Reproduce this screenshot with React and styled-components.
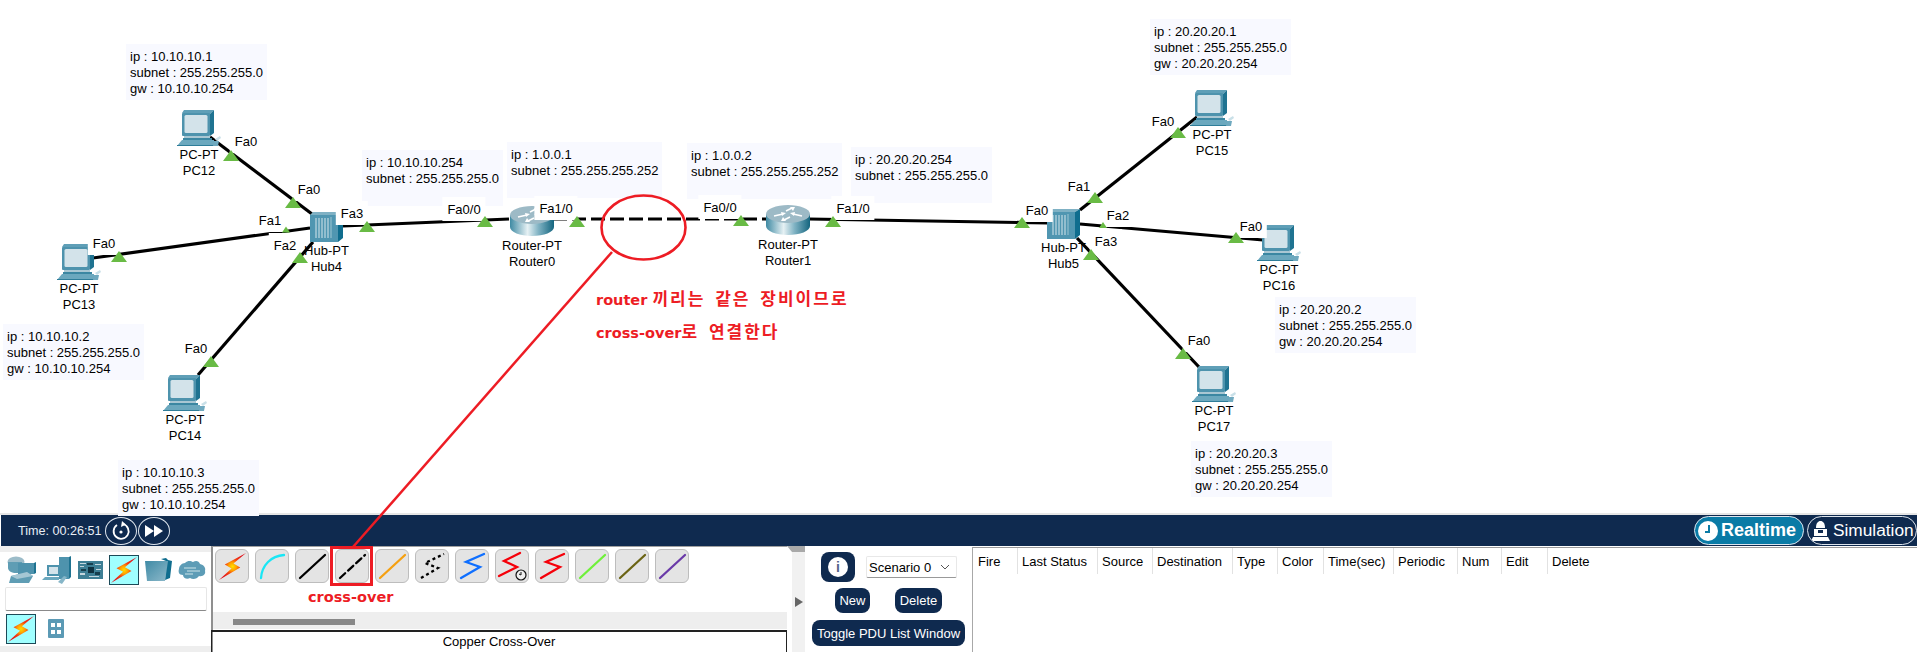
import React from "react";
import styled, { createGlobalStyle } from "styled-components";

const Global = createGlobalStyle`
  html, body { margin: 0; padding: 0; background: #fff; overflow: hidden; }
  body { font-family: "Liberation Sans", Arial, sans-serif; font-size: 13px; color: #000; }
  * { box-sizing: border-box; }
`;

const NAVY = "#0f2a4f";
const RED = "#ed1c24";

const Page = styled.div`
  position: relative;
  width: 1917px;
  height: 652px;
  display: flex;
  flex-direction: column;
  overflow: hidden;
`;
const Canvas = styled.div`
  position: relative;
  height: 515px;
  flex: none;
  background: #fff;
  border-bottom: 2px solid #e6e6e6;
`;
const Note = styled.div`
  position: absolute;
  left: ${(p) => p.$x}px;
  top: ${(p) => p.$y}px;
  width: ${(p) => p.$w}px;
  height: 56px;
  padding: 5px 4px;
  background: #f8f9ff;
  line-height: 16px;
  white-space: nowrap;
`;
const Layer = styled.svg`
  position: absolute;
  left: 0;
  top: 0;
  pointer-events: none;
`;
const Node = styled.div`
  position: absolute;
  left: ${(p) => p.$x}px;
  top: ${(p) => p.$y}px;
  width: ${(p) => p.$w}px;
  display: flex;
  flex-direction: column;
  align-items: center;
  line-height: 16px;
  white-space: nowrap;
  svg { display: block; margin-bottom: ${(p) => p.$gap}px; }
`;
const PortLabel = styled.div`
  position: absolute;
  left: ${(p) => p.$x}px;
  top: ${(p) => p.$y}px;
  transform: translate(-50%, -50%);
  padding: 5px 5px 3px;
  background: #fff;
  line-height: 16px;
  white-space: nowrap;
`;
const Annotation = styled.div`
  position: absolute;
  left: 596px;
  top: ${(p) => p.$y}px;
  height: 22px;
  white-space: nowrap;
  color: ${RED};
  font: bold 14.5px/22px "DejaVu Sans", sans-serif;
`;
const Ko = styled.span`
  font-family: "Noto Sans CJK KR", sans-serif;
  font-size: 17px;
  letter-spacing: 2px;
  word-spacing: 4px;
`;

const TimeBar = styled.div`
  height: 31px;
  flex: none;
  margin-left: 1px;
  background: ${NAVY};
  display: flex;
  align-items: center;
  padding-left: 17px;
`;
const TimeText = styled.span`
  color: #e8eef5;
  font-size: 12.6px;
  margin-right: 3px;
`;
const RoundBtn = styled.div`
  width: 32px;
  height: 28px;
  margin-right: 1px;
  border: 1px solid #dfe6ee;
  border-radius: 50%;
  display: flex;
  align-items: center;
  justify-content: center;
`;
const Spacer = styled.div`flex: 1;`;
const ModeBtn = styled.div`
  height: 29px;
  width: ${(p) => p.$w}px;
  margin-left: ${(p) => p.$ml}px;
  border: 1px solid #dfe6ee;
  border-radius: 15px;
  background: ${(p) => (p.$active ? "#0a7ba6" : NAVY)};
  color: #fff;
  font-size: ${(p) => (p.$active ? "18px" : "17.3px")};
  font-weight: ${(p) => (p.$active ? 700 : 400)};
  display: flex;
  align-items: center;
  gap: 3px;
  padding-left: 3px;
  white-space: nowrap;
  overflow: hidden;
`;
const Dock = styled.div`
  flex: 1;
  display: flex;
  min-height: 0;
  background: #fff;
`;
const LeftPanel = styled.div`
  width: 211px;
  flex: none;
  display: flex;
  flex-direction: column;
`;
const Band = styled.div`
  height: 6px;
  background: #eeeeee;
`;
const CategoryRow = styled.div`
  height: 35px;
  display: flex;
  align-items: center;
  gap: 6px;
  padding-left: 7px;
  svg { display: block; }
`;
const SearchBox = styled.div`
  height: 24px;
  margin: 0 4px 0 5px;
  background: #fff;
  border: 1px solid #e6e6e6;
  border-bottom: 1px solid #8a8a8a;
  border-radius: 2px;
`;
const SubRow = styled.div`
  height: 35px;
  display: flex;
  align-items: center;
  gap: 12px;
  padding-left: 6px;
  svg { display: block; }
`;
const Selected = styled.div`
  width: 30px;
  height: 30px;
  background: #a0ffff;
  border: 1px solid #1c4a58;
  display: flex;
  align-items: center;
  justify-content: center;
`;
const CablePanel = styled.div`
  width: 576px;
  flex: none;
  display: flex;
  flex-direction: column;
  border-left: 2px solid #8f8f8f;
  border-top: 1px solid #a0a0a0;
`;
const CableRow = styled.div`
  display: flex;
  gap: 6px;
  padding: 2px 0 0 2px;
`;
const CableBtn = styled.div`
  width: 34px;
  height: 34px;
  background: #e4e4e4;
  border: 1px solid #bdbdbd;
  border-radius: 6px;
  display: flex;
  align-items: center;
  justify-content: center;
  svg { display: block; }
`;
const CableCaption = styled.div`
  height: 29px;
  padding-left: 95px;
  color: ${RED};
  font: bold 14.5px/29px "DejaVu Sans", sans-serif;
`;
const ScrollTrack = styled.div`
  height: 20px;
  background: #eeeeee;
  padding: 7px 0 0 20px;
`;
const ScrollThumb = styled.div`
  width: 122px;
  height: 6px;
  background: #888;
`;
const CableInfo = styled.div`
  flex: 1;
  margin-top: 1px;
  border-top: 2px solid #222;
  border-left: 1px solid #222;
  border-right: 1px solid #222;
  margin-left: -2px;
  text-align: center;
  line-height: 20px;
  font-size: 13px;
`;
const Collapser = styled.div`
  width: 18px;
  flex: none;
  background: #f1f1f1;
  border-left: 5px solid #fff;
  border-top: 6px solid #a9a9a9;
  display: flex;
  align-items: center;
  justify-content: center;
`;
const Arrow = styled.div`
  width: 0;
  height: 0;
  border-left: 8px solid #666;
  border-top: 5px solid transparent;
  border-bottom: 5px solid transparent;
`;
const ScenarioPanel = styled.div`
  width: 167px;
  flex: none;
  display: flex;
  flex-direction: column;
  padding-top: 6px;
`;
const ScenarioTop = styled.div`
  display: flex;
  align-items: center;
  gap: 11px;
  padding-left: 16px;
  height: 30px;
`;
const InfoBtn = styled.div`
  width: 34px;
  height: 30px;
  background: ${NAVY};
  border-radius: 8px;
  display: flex;
  align-items: center;
  justify-content: center;
`;
const InfoDot = styled.div`
  width: 20px;
  height: 20px;
  border-radius: 50%;
  background: #fff;
  color: #55658a;
  font-size: 14px;
  font-weight: 700;
  line-height: 20px;
  text-align: center;
`;
const SelectBox = styled.div`
  width: 91px;
  height: 22px;
  padding-left: 2px;
  padding-right: 6px;
  border: 1px solid #e8e8e8;
  border-bottom: 1px solid #999;
  border-radius: 2px;
  display: flex;
  align-items: center;
  justify-content: space-between;
  white-space: nowrap;
`;
const ScenarioButtons = styled.div`
  display: flex;
  gap: 25px;
  padding-left: 30px;
  margin-top: 6px;
`;
const PillBtn = styled.div`
  width: ${(p) => p.$w}px;
  height: ${(p) => p.$h}px;
  background: ${NAVY};
  color: #fff;
  border-radius: 8px;
  display: flex;
  align-items: center;
  justify-content: center;
  white-space: nowrap;
`;
const ToggleWrap = styled.div`
  margin: 7px 0 0 7px;
`;
const ListPanel = styled.div`
  flex: 1;
  border-left: 1px solid #a8a8a8;
  border-top: 1px solid #9a9a9a;
  margin-top: 1px;
`;
const ListHeader = styled.div`
  display: flex;
  height: 26px;
`;
const ListCol = styled.div`
  width: ${(p) => p.$w}px;
  flex: none;
  padding: 6px 0 0 ${(p) => (p.$first ? 5 : 4)}px;
  border-left: ${(p) => (p.$first ? "none" : "1px solid #e2e2e2")};
  line-height: 16px;
  white-space: nowrap;
`;

const BoltDefs = ({ id }) => (
  <defs>
    <radialGradient id={id} cx="50%" cy="50%" r="50%">
      <stop offset="0" stopColor="#ffe000" />
      <stop offset="0.3" stopColor="#ffa000" />
      <stop offset="0.55" stopColor="#f54010" />
      <stop offset="1" stopColor="#e0101a" />
    </radialGradient>
  </defs>
);
const Bolt = ({ id, size = 28 }) => (
  <svg width={size} height={size} viewBox="0 0 30 30">
    <BoltDefs id={id} />
    <polygon points="29,1 7,13 14,17 1,29 23,16 16,12" fill={`url(#${id})`} />
  </svg>
);

const PcIcon = () => (
  <svg width="44" height="36" viewBox="0 0 44 36">
    <polygon points="5,3 7,0 37,0 33,4 7,4" fill="#5f9fb7" />
    <polygon points="33,4 37,0 37,23 33,26" fill="#1f7391" />
    <rect x="5" y="3" width="28" height="23" rx="1" fill="#4e93ad" />
    <rect x="7.5" y="5" width="23" height="18" rx="1.5" fill="#d3e3ea" />
    <rect x="7" y="26" width="26" height="2" fill="#a9c7d3" />
    <rect x="6" y="28" width="29" height="2" fill="#3b87a2" />
    <polygon points="5,30 37,30 37,36 0,36" fill="#6ba8be" />
    <rect x="0" y="35" width="37" height="1" fill="#2e7d99" />
    <polygon points="38,29 43,26 44,28 40,31" fill="#c9e0e8" />
    <polygon points="37,31 42,31 41,36 36,36" fill="#6fa9bf" />
  </svg>
);
const RouterIcon = () => (
  <svg width="44" height="30" viewBox="0 0 44 30">
    <defs>
      <linearGradient id="rbody" x1="0" x2="1" y1="0" y2="0">
        <stop offset="0" stopColor="#3f8aa3" />
        <stop offset="0.4" stopColor="#e6f1f4" />
        <stop offset="0.65" stopColor="#7fb2c3" />
        <stop offset="1" stopColor="#14657f" />
      </linearGradient>
    </defs>
    <path d="M0 9 V21 C0 26 10 30 22 30 C34 30 44 26 44 21 V9 Z" fill="url(#rbody)" />
    <ellipse cx="22" cy="9" rx="22" ry="9" fill="#9dbac6" />
    <g stroke="#fff" strokeWidth="1.6" fill="#fff">
      <path d="M8 11 L17 9 M27 9 L36 11 M20 6 L26 3 M24 12 L18 15" fill="none" />
      <polygon points="20,8 15,7 16,11" stroke="none" />
      <polygon points="24,8 29,7 28,11" stroke="none" />
      <polygon points="24,2 29,2 27,6" stroke="none" />
      <polygon points="20,16 15,16 17,12" stroke="none" />
    </g>
  </svg>
);
const HubIcon = () => (
  <svg width="33" height="30" viewBox="0 0 33 30">
    <polygon points="0,3 3,0 33,0 28,3" fill="#7fb1c4" />
    <polygon points="28,3 33,0 33,26 28,30" fill="#0f6d8e" />
    <rect x="0" y="3" width="28" height="27" fill="#5096b1" />
    <g stroke="#d5e6ec" strokeWidth="1">
      <path d="M6 6 V26 M9 6 V26 M12 6 V26 M15 6 V26 M18 6 V26" />
    </g>
    <rect x="20.5" y="5" width="1" height="21" fill="#9cc5d3" />
  </svg>
);

const nodes = [
  { k: "pc", x: 177, y: 110, a: "PC-PT", b: "PC12" },
  { k: "pc", x: 57, y: 244, a: "PC-PT", b: "PC13" },
  { k: "pc", x: 163, y: 375, a: "PC-PT", b: "PC14" },
  { k: "pc", x: 1190, y: 90, a: "PC-PT", b: "PC15" },
  { k: "pc", x: 1257, y: 225, a: "PC-PT", b: "PC16" },
  { k: "pc", x: 1192, y: 366, a: "PC-PT", b: "PC17" },
  { k: "hub", x: 310, y: 212, a: "Hub-PT", b: "Hub4" },
  { k: "hub", x: 1047, y: 209, a: "Hub-PT", b: "Hub5" },
  { k: "router", x: 510, y: 206, a: "Router-PT", b: "Router0" },
  { k: "router", x: 766, y: 205, a: "Router-PT", b: "Router1" },
];
const icons = {
  pc: [PcIcon, 44, 1],
  hub: [HubIcon, 33, 1],
  router: [RouterIcon, 44, 2],
};

const notes = [
  { x: 126, y: 44, w: 141, l: ["ip : 10.10.10.1", "subnet : 255.255.255.0", "gw : 10.10.10.254"] },
  { x: 362, y: 150, w: 141, l: ["ip : 10.10.10.254", "subnet : 255.255.255.0"] },
  { x: 507, y: 142, w: 155, l: ["ip : 1.0.0.1", "subnet : 255.255.255.252"] },
  { x: 687, y: 143, w: 155, l: ["ip : 1.0.0.2", "subnet : 255.255.255.252"] },
  { x: 851, y: 147, w: 141, l: ["ip : 20.20.20.254", "subnet : 255.255.255.0"] },
  { x: 1150, y: 19, w: 141, l: ["ip : 20.20.20.1", "subnet : 255.255.255.0", "gw : 20.20.20.254"] },
  { x: 3, y: 324, w: 141, l: ["ip : 10.10.10.2", "subnet : 255.255.255.0", "gw : 10.10.10.254"] },
  { x: 118, y: 460, w: 141, l: ["ip : 10.10.10.3", "subnet : 255.255.255.0", "gw : 10.10.10.254"] },
  { x: 1275, y: 297, w: 141, l: ["ip : 20.20.20.2", "subnet : 255.255.255.0", "gw : 20.20.20.254"] },
  { x: 1191, y: 441, w: 141, l: ["ip : 20.20.20.3", "subnet : 255.255.255.0", "gw : 20.20.20.254"] },
];

const links = [
  [210, 137, 312, 214],
  [93, 258, 310, 228],
  [313, 242, 198, 375],
  [343, 226, 509, 219],
  [809, 219, 1048, 223],
  [1080, 210, 1197, 117],
  [1080, 224, 1263, 240],
  [1077, 238, 1199, 367],
];

const ports = [
  [246, 141, "Fa0"], [309, 189, "Fa0"], [270, 220, "Fa1"], [285, 245, "Fa2"], [352, 213, "Fa3"], [104, 243, "Fa0"],
  [196, 348, "Fa0"], [464, 209, "Fa0/0"], [556, 208, "Fa1/0"], [720, 207, "Fa0/0"], [853, 208, "Fa1/0"],
  [1037, 210, "Fa0"], [1079, 186, "Fa1"], [1118, 215, "Fa2"], [1106, 241, "Fa3"], [1163, 121, "Fa0"], [1251, 226, "Fa0"], [1199, 340, "Fa0"],
];

const tris = [
  [231, 156], [293, 203], [119, 257], [300, 258], [367, 227], [211, 362],
  [485, 222], [577, 222], [741, 221], [833, 222], [1022, 223], [1095, 198],
  [1178, 133], [1236, 238], [1091, 255], [1183, 354],
];
const smallTris = [[286, 229.5], [1103, 225]];

const Line = ({ c, w = 2.3, d }) => <path d={d} stroke={c} strokeWidth={w} fill="none" strokeLinecap="round" />;

const cables = [
  <Bolt id="bc" size={29} />,
  <svg width="32" height="32" viewBox="0 0 32 32"><path d="M5 28 C6 15 15 6 28 5" stroke="#19e6f5" strokeWidth="2.3" fill="none" strokeLinecap="round" /></svg>,
  <svg width="32" height="32" viewBox="0 0 32 32"><Line c="#000" d="M4 28 L29 5" /></svg>,
  <svg width="32" height="32" viewBox="0 0 32 32"><path d="M4 28 L29 5" stroke="#000" strokeWidth="2.3" strokeDasharray="7 4" strokeLinecap="round" fill="none" /></svg>,
  <svg width="32" height="32" viewBox="0 0 32 32"><Line c="#f5a011" d="M4 28 L29 5" /></svg>,
  <svg width="32" height="32" viewBox="0 0 32 32"><path d="M5 28 L22 18 L9 13 L28 4" stroke="#000" strokeWidth="2.3" strokeDasharray="3 3" fill="none" /></svg>,
  <svg width="32" height="32" viewBox="0 0 32 32"><path d="M5 28 L24 17 L10 12 L28 4" stroke="#0f6fff" strokeWidth="2.3" fill="none" strokeLinecap="round" /></svg>,
  <svg width="32" height="32" viewBox="0 0 32 32"><path d="M3 26 L21 17 L8 11 L24 3" stroke="#f5000a" strokeWidth="2.3" fill="none" strokeLinecap="round" /><circle cx="25" cy="25" r="5" fill="#eee" stroke="#111" strokeWidth="1.2" /><path d="M25 25 V22 M25 25 L23 24" stroke="#111" strokeWidth="1" /></svg>,
  <svg width="32" height="32" viewBox="0 0 32 32"><path d="M5 28 L24 17 L10 12 L28 4" stroke="#f5000a" strokeWidth="2.3" fill="none" strokeLinecap="round" /></svg>,
  <svg width="32" height="32" viewBox="0 0 32 32"><Line c="#6ff03a" d="M4 28 L29 5" /></svg>,
  <svg width="32" height="32" viewBox="0 0 32 32"><Line c="#6b6414" d="M4 28 L29 5" /></svg>,
  <svg width="32" height="32" viewBox="0 0 32 32"><Line c="#6a3aa8" d="M4 28 L29 5" /></svg>,
];

const columns = [
  ["Fire", 44], ["Last Status", 80], ["Source", 55], ["Destination", 80], ["Type", 45], ["Color", 46],
  ["Time(sec)", 70], ["Periodic", 64], ["Num", 44], ["Edit", 46], ["Delete", 70],
];

const DevicesIcon = () => (
  <svg width="29" height="28" viewBox="0 0 29 28">
    <ellipse cx="9" cy="6" rx="8.5" ry="5.5" fill="#9cbcc9" />
    <path d="M1 6 V12 C1 15 5 17 9 17 L15 17 V6 Z" fill="#5f9db4" />
    <rect x="11" y="7" width="16" height="11" fill="#4f93ad" />
    <polygon points="27,7 29,6 29,17 27,18" fill="#1f7391" />
    <polygon points="4,20 20,16 26,20 22,27 2,27" fill="#5f9db4" />
    <polygon points="4,20 20,16 26,20 10,23" fill="#a5c7d4" />
  </svg>
);
const EndIcon = () => (
  <svg width="30" height="28" viewBox="0 0 30 28">
    <rect x="17" y="1" width="10" height="22" fill="#4e93ad" />
    <polygon points="27,1 29,0 29,21 27,23" fill="#1f7391" />
    <rect x="5" y="9" width="13" height="11" fill="#4e93ad" />
    <rect x="7" y="11" width="9" height="7" fill="#d3e3ea" />
    <polygon points="3,21 17,21 17,24 0,24" fill="#6ba8be" />
    <polygon points="16,26 22,20 25,21 20,28" fill="#86b6c8" />
  </svg>
);
const BoardIcon = () => (
  <svg width="25" height="18" viewBox="0 0 25 18">
    <rect width="25" height="18" fill="#3e7f95" />
    <rect x="10" y="6" width="6" height="6" fill="#10313f" />
    <g fill="#c4d7de">
      <rect x="2" y="2" width="6" height="1" /><rect x="2" y="5" width="4" height="1" /><rect x="17" y="3" width="6" height="1" />
      <rect x="18" y="8" width="5" height="1" /><rect x="2" y="12" width="5" height="2" /><rect x="11" y="15" width="10" height="1" />
    </g>
    <g fill="#173f4e">
      <rect x="3" y="8" width="5" height="2" /><rect x="17" y="11" width="5" height="3" /><rect x="9" y="2" width="6" height="2" />
    </g>
  </svg>
);
const FolderIcon = () => (
  <svg width="27" height="24" viewBox="0 0 27 24">
    <defs>
      <linearGradient id="fold" x1="0" x2="1" y1="0" y2="1">
        <stop offset="0" stopColor="#3f8aa5" />
        <stop offset="1" stopColor="#8db9ca" />
      </linearGradient>
    </defs>
    <polygon points="16,1 21,0 23,2 27,3 25,20 20,22 21,3" fill="#0f6d8e" />
    <polygon points="0,3 23,3 20,23 2,23" fill="url(#fold)" />
  </svg>
);
const CloudIcon = () => (
  <svg width="28" height="20" viewBox="0 0 28 20">
    <path d="M7 3 C10 0 13 1 15 2 C18 0 21 1 22 4 C26 5 28 8 27 11 C28 14 25 17 21 16 C19 19 15 20 12 18 C9 20 5 18 5 15 C1 15 0 12 1 9 C1 6 4 3 7 3 Z" fill="#5d9cb6" />
    <path d="M6 8 H18 M9 11 H22 M7 14 H15" stroke="#a8cbd8" strokeWidth="1.4" fill="none" />
  </svg>
);
const GridIcon = () => (
  <svg width="16" height="19" viewBox="0 0 16 19">
    <rect width="16" height="19" rx="1" fill="#5b9ab5" />
    <rect x="3" y="4" width="4" height="4" fill="#fff" />
    <rect x="9" y="4" width="4" height="4" fill="#fff" />
    <rect x="3" y="11" width="4" height="4" fill="#fff" />
    <rect x="9" y="11" width="4" height="4" fill="#fff" />
  </svg>
);

export default function App() {
  return (
    <Page>
      <Global />
      <Canvas>
        {notes.map((n, i) => (
          <Note key={i} $x={n.x} $y={n.y} $w={n.w}>
            {n.l.map((t) => (
              <div key={t}>{t}</div>
            ))}
          </Note>
        ))}
        <Layer width="1917" height="515">
          {links.map(([a, b, c, d], i) => (
            <line key={i} x1={a} y1={b} x2={c} y2={d} stroke="#000" strokeWidth="3.2" />
          ))}
          <line x1="553" y1="219" x2="766" y2="219" stroke="#000" strokeWidth="3.2" strokeDasharray="14 5" />
        </Layer>
        {nodes.map((n) => {
          const [Icon, w, gap] = icons[n.k];
          return (
            <Node key={n.b} $x={n.x} $y={n.y} $w={w} $gap={gap}>
              <Icon />
              <span>{n.a}</span>
              <span>{n.b}</span>
            </Node>
          );
        })}
        {ports.map(([x, y, t], i) => (
          <PortLabel key={i} $x={x} $y={y}>
            {t}
          </PortLabel>
        ))}
        <Layer width="1917" height="515">
          {tris.map(([x, y], i) => (
            <polygon key={i} points={`${x},${y - 6} ${x + 8},${y + 5} ${x - 8},${y + 5}`} fill="#69bb45" />
          ))}
          {smallTris.map(([x, y], i) => (
            <polygon key={i} points={`${x},${y - 3} ${x + 4},${y + 3} ${x - 4},${y + 3}`} fill="#69bb45" />
          ))}
        </Layer>
        <Annotation $y={287}>
          router <Ko>끼리는 같은 장비이므로</Ko>
        </Annotation>
        <Annotation $y={320}>
          cross-over<Ko>로 연결한다</Ko>
        </Annotation>
      </Canvas>
      <TimeBar>
        <TimeText>Time: 00:26:51</TimeText>
        <RoundBtn>
          <svg width="20" height="20" viewBox="0 0 20 20">
            <path d="M6 4 A7.5 7.5 0 1 0 12 3" stroke="#fff" strokeWidth="1.8" fill="none" />
            <polygon points="11,0 15,3.5 10,6" fill="#fff" />
            <circle cx="10" cy="11" r="1.6" fill="#fff" />
          </svg>
        </RoundBtn>
        <RoundBtn>
          <svg width="20" height="16" viewBox="0 0 20 16">
            <polygon points="1,2 10,8 1,14" fill="#fff" />
            <polygon points="10,2 19,8 10,14" fill="#fff" />
          </svg>
        </RoundBtn>
        <Spacer />
        <ModeBtn $active $w={110} $ml={0}>
          <svg width="20" height="20" viewBox="0 0 20 20">
            <circle cx="10" cy="10" r="10" fill="#fff" />
            <path d="M11 4 V11 H7" stroke="#0a7ba6" strokeWidth="2" fill="none" />
          </svg>
          Realtime
        </ModeBtn>
        <ModeBtn $w={110} $ml={3}>
          <svg width="19" height="22" viewBox="0 0 19 22">
            <path d="M5 8 C5 3 7 1 9.5 1 C12 1 14 3 14 8 Z" fill="#fff" />
            <rect x="3" y="9" width="13" height="7" fill="#fff" />
            <rect x="7" y="10" width="5" height="3" fill={NAVY} />
            <polygon points="2,17 17,17 19,21 0,21" fill="#fff" />
          </svg>
          Simulation
        </ModeBtn>
      </TimeBar>
      <Dock>
        <LeftPanel>
          <Band />
          <CategoryRow>
            <DevicesIcon />
            <EndIcon />
            <BoardIcon />
            <Selected>
              <Bolt id="b1" />
            </Selected>
            <FolderIcon />
            <CloudIcon />
          </CategoryRow>
          <SearchBox />
          <SubRow>
            <Selected>
              <Bolt id="b2" />
            </Selected>
            <GridIcon />
          </SubRow>
          <Band />
        </LeftPanel>
        <CablePanel>
          <CableRow>
            {cables.map((c, i) => (
              <CableBtn key={i}>{c}</CableBtn>
            ))}
          </CableRow>
          <CableCaption>cross-over</CableCaption>
          <ScrollTrack>
            <ScrollThumb />
          </ScrollTrack>
          <CableInfo>Copper Cross-Over</CableInfo>
        </CablePanel>
        <Collapser>
          <Arrow />
        </Collapser>
        <ScenarioPanel>
          <ScenarioTop>
            <InfoBtn>
              <InfoDot>i</InfoDot>
            </InfoBtn>
            <SelectBox>
              Scenario 0
              <svg width="10" height="6" viewBox="0 0 10 6">
                <path d="M1 1 L5 5 L9 1" stroke="#555" strokeWidth="1" fill="none" />
              </svg>
            </SelectBox>
          </ScenarioTop>
          <ScenarioButtons>
            <PillBtn $w={35} $h={25}>New</PillBtn>
            <PillBtn $w={47} $h={25}>Delete</PillBtn>
          </ScenarioButtons>
          <ToggleWrap>
            <PillBtn $w={153} $h={26}>Toggle PDU List Window</PillBtn>
          </ToggleWrap>
        </ScenarioPanel>
        <ListPanel>
          <ListHeader>
            {columns.map(([t, w], i) => (
              <ListCol key={t} $w={w} $first={i === 0}>
                {t}
              </ListCol>
            ))}
          </ListHeader>
        </ListPanel>
      </Dock>
      <Layer width="1917" height="652">
        <ellipse cx="643.5" cy="227.5" rx="42" ry="32" fill="none" stroke={RED} strokeWidth="2.6" />
        <line x1="612" y1="252" x2="353" y2="547" stroke={RED} strokeWidth="2.5" />
        <rect x="331.5" y="547.5" width="40" height="37" fill="none" stroke={RED} strokeWidth="3" />
      </Layer>
    </Page>
  );
}
